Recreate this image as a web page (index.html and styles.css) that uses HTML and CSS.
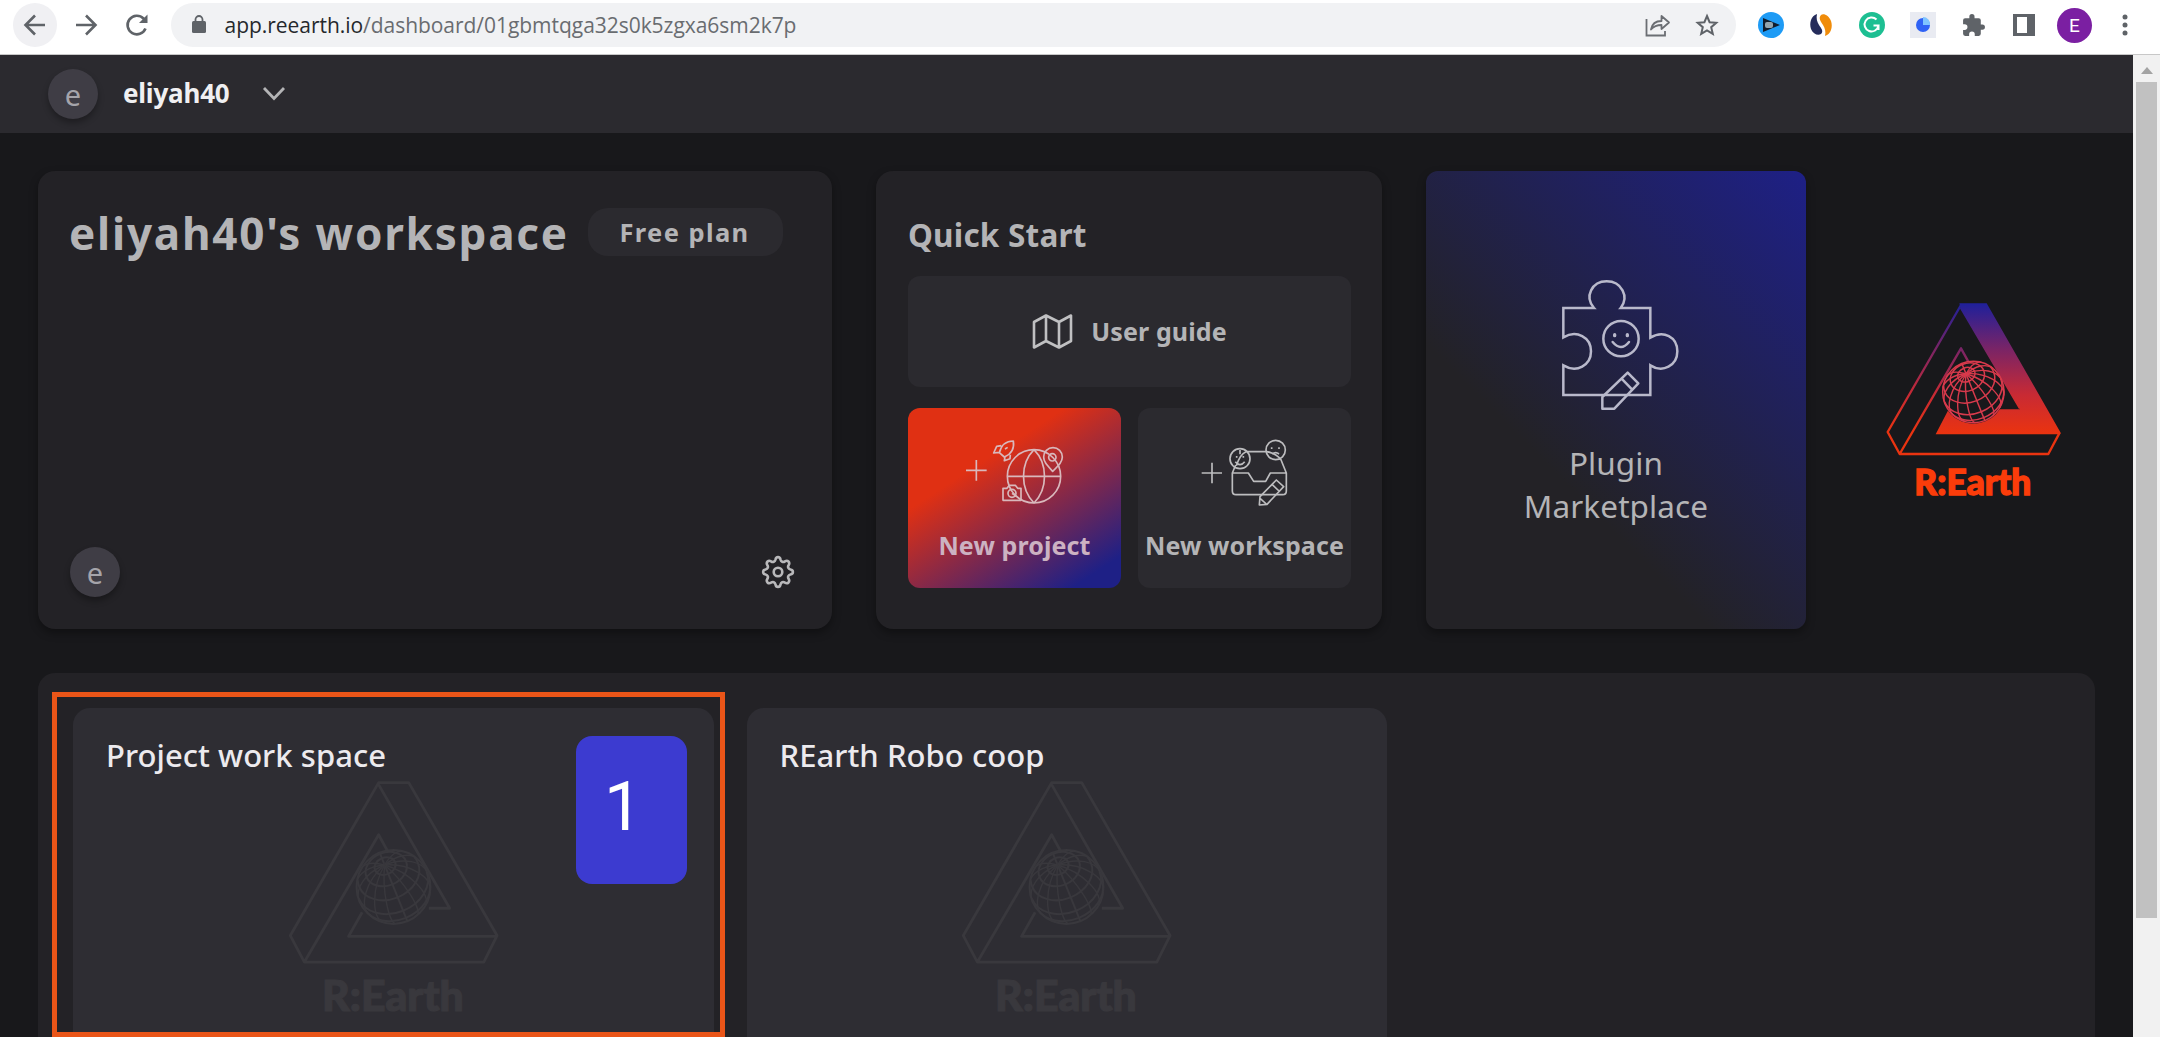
FILE: index.html
```
<!DOCTYPE html>
<html lang="en">
<head>
<meta charset="utf-8">
<title>Re:Earth dashboard</title>
<link rel="stylesheet" href="styles.css">
</head>
<body>
<svg class="defs" width="0" height="0" aria-hidden="true">
  <defs>
    <linearGradient id="brand" gradientUnits="userSpaceOnUse" x1="0" y1="72" x2="0" y2="460">
      <stop offset="0" stop-color="#20209a"/><stop offset=".35" stop-color="#7a2466"/><stop offset=".7" stop-color="#c82a34"/><stop offset="1" stop-color="#ea3310"/>
    </linearGradient>
    <symbol id="globe" viewBox="-100 -100 200 200" overflow="visible">
      <g fill="none">
        <circle r="92"/>
        <g transform="rotate(-22)">
          <ellipse cy="-56" rx="27" ry="21"/><ellipse cy="-48" rx="53" ry="41"/>
          <path d="M-76-50A80 62 0 0 0-79-33A79 61 0 0 0 79-33A80 62 0 0 0 76-50"/>
          <path d="M-91-6A91 70 0 0 0 91-6"/><path d="M-87 26A88 67 0 0 0 87 26"/>
          <path d="M0-92V92"/>
          <path class="meridian" transform="matrix(35.2 65.6 0 -59 0 0)" d="M0 1A1 1 0 0 0 .792-.61"/>
          <path class="meridian" transform="matrix(65 50.2 0 -59 0 0)" d="M0 1A1 1 0 0 0 .862-.508"/>
          <path class="meridian" transform="matrix(85 27.2 0 -59 0 0)" d="M0 1A1 1 0 0 0 .953-.304"/>
          <path class="meridian" transform="matrix(92 0 0 -59 0 0)" d="M0 1A1 1 0 0 0 1 0"/>
          <path class="meridian" transform="matrix(85 -27.2 0 -59 0 0)" d="M0 1A1 1 0 0 0 .953 .304"/>
          <path class="meridian" transform="matrix(65 -50.2 0 -59 0 0)" d="M0 1A1 1 0 0 0 .862 .508"/>
          <path class="meridian" transform="matrix(-35.2 65.6 0 -59 0 0)" d="M0 1A1 1 0 0 0 .792-.61"/>
          <path class="meridian" transform="matrix(-65 50.2 0 -59 0 0)" d="M0 1A1 1 0 0 0 .862-.508"/>
          <path class="meridian" transform="matrix(-85 27.2 0 -59 0 0)" d="M0 1A1 1 0 0 0 .953-.304"/>
          <path class="meridian" transform="matrix(-92 0 0 -59 0 0)" d="M0 1A1 1 0 0 0 1 0"/>
          <path class="meridian" transform="matrix(-85 -27.2 0 -59 0 0)" d="M0 1A1 1 0 0 0 .953 .304"/>
          <path class="meridian" transform="matrix(-65 -50.2 0 -59 0 0)" d="M0 1A1 1 0 0 0 .862 .508"/>
        </g>
      </g>
    </symbol>
    <symbol id="watermark" viewBox="0 0 690 720">
      <g fill="none" stroke="#39383d" stroke-width="7" stroke-linejoin="round">
        <path d="M303 75H378L598 456L565 522H118L83 456ZM303 80L480 388H428M325 245L303 205L118 522M262 398L228 458H598"/>
      </g>
      <g class="faint"><use href="#globe" x="240" y="235" width="200" height="200"/></g>
      <text class="wordmark" x="162" y="645" textLength="353" lengthAdjust="spacingAndGlyphs" fill="#39383d" stroke="#39383d" stroke-width="3">R:Earth</text>
    </symbol>
  </defs>
</svg>

<div class="browser">
  <div class="nav">
    <span class="nav-btn back"><svg width="24" height="24" viewBox="0 0 24 24"><path d="M22 12H3M12 2.500 2.500 12l9.500 9.500"/></svg></span>
    <span class="nav-btn"><svg width="24" height="24" viewBox="0 0 24 24"><path d="M2 12h19M12 2.500 21.500 12 12 21.500"/></svg></span>
    <span class="nav-btn"><svg width="24" height="24" viewBox="0 0 24 24"><path d="M20.500 15.500A9.300 9.300 0 1 1 18.500 5.500L21 8"/><path d="M22.500 1.500V10H14z" fill="#5f6368" stroke="none"/></svg></span>
  </div>
  <div class="omnibox">
    <svg class="lock" width="14" height="18" viewBox="0 0 14 18"><rect y="6" width="14" height="12" rx="1.500" fill="#5f6368"/><path d="M3.500 7V4.500a3.500 3.500 0 0 1 7 0V7" fill="none" stroke="#5f6368" stroke-width="1.800"/></svg>
    <span class="url">app.reearth.io<span class="path">/dashboard/01gbmtqga32s0k5zgxa6sm2k7p</span></span>
    <svg class="share" width="26" height="24" viewBox="0 0 26 24" fill="none" stroke="#6b6e73" stroke-width="1.800"><path d="M1.500 6V22.500H20V18"/><path d="M6 16.500C7 11 11 8 16.500 8V3L24 9.500 16.500 16V12C12 12 9 13 6 16.500Z" stroke-linejoin="round"/></svg>
    <svg class="star" width="24" height="24" viewBox="0 0 24 24" fill="none" stroke="#5f6368" stroke-width="2"><path d="M12 3l2.600 6.200 6.700.6-5.100 4.400 1.600 6.600-5.800-3.500-5.800 3.500 1.600-6.600-5.100-4.400 6.700-.6z"/></svg>
  </div>
  <div class="exts">
    <span><svg width="26" height="26" viewBox="0 0 26 26"><circle cx="13" cy="13" r="13" fill="#1e9bf5"/><path d="M5 6l17 7-17 7z" fill="#111b2b"/><rect x="7" y="10" width="8" height="6" rx="2" fill="#93a3ad"/></svg></span>
    <span><svg width="24" height="24" viewBox="0 0 24 24"><path d="M8 1C2 3 0 10 2 16c2 5 7 7 10 5 3-3 0-6-2-9S7 5 8 1z" fill="#252c5b"/><path d="M16 23c6-2 8-9 6-15-2-5-7-8-10-6-3 3 0 7 2 10s3 7 2 11z" fill="#f08c0a"/></svg></span>
    <span><svg width="26" height="26" viewBox="0 0 26 26"><circle cx="13" cy="13" r="13" fill="#1dbf92"/><path d="M17.500 7.500a7 7 0 1 0 2 6h-5M19.500 13.500V18" fill="none" stroke="#fff" stroke-width="2"/></svg></span>
    <span><svg width="26" height="26" viewBox="0 0 26 26"><path d="M0 0h26v26H0z" fill="#e9ebf2"/><circle cx="13" cy="13" r="7" fill="#2f62f5"/><path d="M13 13V5a7 7 0 0 1 7 8z" fill="#7fc4ff"/></svg></span>
    <span><svg width="25" height="25" viewBox="0 0 24 24"><path fill="#5f6368" d="M20.500 11H19V7a2 2 0 0 0-2-2h-4V3.500a2.500 2.500 0 0 0-5 0V5H4a2 2 0 0 0-2 2v3.800h1.500a2.700 2.700 0 0 1 0 5.400H2V20a2 2 0 0 0 2 2h3.800v-1.500a2.700 2.700 0 0 1 5.400 0V22H17a2 2 0 0 0 2-2v-4h1.500a2.500 2.500 0 0 0 0-5z"/></svg></span>
    <span><svg width="22" height="22" viewBox="0 0 22 22"><path d="M0 0h22v22H0zM4 3v16h10V3z" fill="#5f6368" fill-rule="evenodd"/></svg></span>
    <span><b class="profile">E</b></span>
    <span><svg width="6" height="22" viewBox="0 0 6 22" fill="#5f6368"><circle cx="3" cy="3" r="2.500"/><circle cx="3" cy="11" r="2.500"/><circle cx="3" cy="19" r="2.500"/></svg></span>
  </div>
</div>

<div class="viewport">
  <div class="page">
    <header class="header">
      <span class="avatar">e</span>
      <span class="user">eliyah40</span>
      <svg width="24" height="16" viewBox="0 0 24 16"><path d="M2 2l10 10.500L22 2" fill="none" stroke="#b4b4b6" stroke-width="2.800"/></svg>
    </header>

    <main class="dashboard">
      <div class="top">
        <section class="card workspace">
          <div class="ws-head">
            <h1>eliyah40's workspace</h1>
            <span class="plan">Free plan</span>
          </div>
          <div class="ws-foot">
            <span class="avatar">e</span>
            <svg width="34" height="34" viewBox="0 0 34 34" fill="none" stroke="#b8b8ba" stroke-width="2.600" stroke-linejoin="round"><path d="M14.500 4.500C15 1.300 19 1.300 19.500 4.500 20 6.800 22 7.600 24 6.300 26.700 4.700 29.300 7.300 27.700 10 26.400 12 27.200 14 29.500 14.500 32.700 15 32.700 19 29.500 19.500 27.200 20 26.400 22 27.700 24 29.300 26.700 26.700 29.300 24 27.700 22 26.400 20 27.200 19.500 29.500 19 32.700 15 32.700 14.500 29.500 14 27.200 12 26.400 10 27.700 7.300 29.300 4.700 26.700 6.300 24 7.600 22 6.800 20 4.500 19.500 1.300 19 1.300 15 4.500 14.500 6.800 14 7.600 12 6.300 10 4.700 7.300 7.300 4.700 10 6.300 12 7.600 14 6.800 14.500 4.500Z"/><circle cx="17" cy="17" r="4.300"/></svg>
          </div>
        </section>

        <section class="card quick">
          <h2>Quick Start</h2>
          <div class="tile guide">
            <svg width="41" height="37" viewBox="0 0 41 37" fill="none" stroke="#c0c0c2" stroke-width="2.600" stroke-linejoin="round"><path d="M2 9L14 2.500 27 9 39 2.500V28L27 34.500 14 28 2 34.500ZM14 2.500V28M27 9V34.500"/></svg>
            <span class="label">User guide</span>
          </div>
          <div class="pair">
            <div class="tile action project">
              <svg width="100" height="70" viewBox="285 832 300 210" fill="none" stroke="#d9b8bc" stroke-width="5" stroke-linejoin="round">
                <path d="M288 929h62M319 898v62"/><circle cx="492" cy="947" r="80"/><path d="M412 947h160M492 867c-42 42-42 118 0 160M492 867c42 42 42 118 0 160"/>
                <path d="M548 932c-18-20-27-29-27-43a27 27 0 0 1 56 0c0 14-9 23-29 43z"/><circle cx="547" cy="890" r="11"/>
                <path d="M399 983h12l7-9h18l7 9h10v36h-54z"/><circle cx="426" cy="998" r="12"/><path d="M426 998l14 10"/>
                <path d="M430 841c-22 0-36 12-42 35l15 13c22-9 31-23 27-48zM394 855l-14 2-9 20 16-2M421 882l-1 12-17 6 2-12M405 865l8-5"/>
              </svg>
              <span class="label project-label">New project</span>
            </div>
            <div class="tile action">
              <svg width="88" height="70" viewBox="994 832 264 210" fill="none" stroke="#bdbdbf" stroke-width="5" stroke-linejoin="round">
                <path d="M996 937h61M1027 906v62M1129 873h62M1233 895l17 42v54q0 11-11 11h-140q-11 0-11-11v-54l10-24M1088 937h48l16 25h36l14-25h48"/>
                <path d="M1129 873c-14 6-22 20-29 42M1191 873c16 3 32 10 42 24"/>
                <circle cx="1111" cy="894" r="30"/><path d="M1097 903q14 18 28 0M1101 886v5M1121 886v5M1111 868v13"/>
                <circle cx="1218" cy="868" r="29"/><path d="M1206 860v5M1228 860v5M1208 880q10-8 20 0"/>
                <path d="M1220 958l22 20-50 53-23 2 2-25zM1207 971l21 20M1172 1014l18 16"/>
              </svg>
              <span class="label">New workspace</span>
            </div>
          </div>
        </section>

        <section class="plugin">
          <svg width="120" height="134" viewBox="422 355 360 402" fill="none" stroke="#b9b9cb" stroke-width="7.500">
            <path d="M432 445h92c-30-34-6-80 38-80s69 46 42 80h89v89c40-24 81-2 81 41s-44 66-81 42v89H432v-89c40 24 83 0 83-42s-43-66-83-42z"/>
            <circle cx="605" cy="537" r="53"/><path d="M580 547q25 30 49 0" stroke-linecap="round"/><path d="M586 525v3M624 525v3" stroke-linecap="round" stroke-width="10"/>
            <path d="M625 639l32 32-72 76h-36v-35zM606 656l32 33" stroke-linejoin="round"/>
          </svg>
          <p>Plugin<br>Marketplace</p>
        </section>

        <svg class="logo" width="230" height="240" viewBox="0 0 690 720">
          <path fill="url(#brand)" d="M298 70H380L602 458 600 463H227L266 388H480L303 86Z"/>
          <circle cx="340" cy="336" r="95" fill="#18181b"/>
          <path fill="none" stroke="url(#brand)" stroke-width="7" stroke-linejoin="round" d="M303 75L83 456L119 522H565L599 458M325 245L303 205L119 522M303 84L480 385"/>
          <g class="vivid"><use href="#globe" x="240" y="236" width="200" height="200"/></g>
          <text class="wordmark" x="163" y="646" textLength="351" lengthAdjust="spacingAndGlyphs" fill="#fb3c0a" stroke="#fb3c0a" stroke-width="4">R:Earth</text>
        </svg>
      </div>

      <div class="projects">
        <article class="proj">
          <h3>Project work space</h3>
          <svg class="mark" width="277" height="290"><use href="#watermark"/></svg>
          <span class="step">1</span>
          <span class="frame"></span>
        </article>
        <article class="proj">
          <h3>REarth Robo coop</h3>
          <svg class="mark" width="277" height="290"><use href="#watermark"/></svg>
        </article>
      </div>
    </main>
  </div>
  <div class="scrollbar">
    <svg width="12" height="7" viewBox="0 0 12 7"><path d="M0 7L6 0l6 7z" fill="#a3a3a3"/></svg>
    <div class="thumb"></div>
  </div>
</div>
</body>
</html>
```
FILE: styles.css
```
* { box-sizing: border-box; }
body {
  margin: 0;
  height: 1037px;
  overflow: hidden;
  display: flex;
  flex-direction: column;
  font-family: "Noto Sans", "Open Sans", sans-serif;
  color: #b4b4b6;
  background: #18181b;
}
h1, h2, h3, p { margin: 0; white-space: nowrap; }
svg { display: block; flex: none; }
.defs { position: absolute; }

/* browser toolbar */
.browser {
  height: 55px;
  flex: none;
  display: flex;
  align-items: flex-start;
  background: #fff;
  border-bottom: 1px solid #c8c8c8;
}
.nav { display: flex; width: 171px; padding: 3px 0 0 13px; gap: 7px; }
.nav-btn { width: 44px; height: 44px; border-radius: 50%; display: grid; place-items: center; }
.nav-btn.back { background: #f0f0f3; }
.nav-btn svg { fill: none; stroke: #5f6368; stroke-width: 2.6; }
.omnibox {
  width: 1565px;
  height: 44px;
  margin-top: 3px;
  padding: 0 17px 0 21px;
  border-radius: 22px;
  background: #f1f2f4;
  display: flex;
  align-items: center;
}
.lock { margin-top: -3px; }
.url { flex: 1; margin-left: 18.5px; font: 21px/44px "Open Sans", sans-serif; color: #25282c; letter-spacing: -.04px; }
.path { color: #696c70; }
.star { margin-left: 24px; }
.exts { display: flex; height: 50px; margin-left: 9.5px; }
.exts span { width: 50.6px; display: grid; place-items: center; }
.profile {
  width: 35px; height: 35px; border-radius: 50%;
  background: #7b1fa2; color: #fff;
  font: 19px/35px Roboto, sans-serif; text-align: center;
}

/* page and scrollbar */
.viewport { flex: 1; display: flex; min-height: 0; }
.page { width: 2133px; display: flex; flex-direction: column; }
.scrollbar { flex: 1; background: #f1f1f1; display: flex; flex-direction: column; align-items: center; padding-top: 12px; }
.thumb { width: 21px; height: 836px; margin-top: 8px; background: #c1c1c1; }

.header { height: 78px; flex: none; display: flex; align-items: center; padding-left: 48px; background: #2b2a2f; }
.header svg { margin-left: 32px; }
.avatar {
  width: 50px; height: 50px; border-radius: 50%;
  background: #3f3d45; color: #a5a4aa;
  font-size: 29px; line-height: 52px; text-align: center;
  box-shadow: 0 4px 6px rgba(0, 0, 0, .3);
}
.user { margin: -2px 0 0 25px; font-size: 26px; font-weight: 700; color: #f0f0f2; letter-spacing: -.2px; }

.dashboard { padding: 38px 38px 0; flex: 1; min-height: 0; display: flex; flex-direction: column; gap: 44px; }
.top { display: flex; gap: 44px; height: 458px; flex: none; }
.card { border-radius: 17px; background: #232226; box-shadow: 0 4px 8px rgba(0, 0, 0, .35); }

.workspace { width: 794px; display: flex; flex-direction: column; justify-content: space-between; padding: 30px 37px 32px 32px; }
.ws-head { display: flex; align-items: center; gap: 22px; }
h1 { width: 497px; font-size: 44px; line-height: 64px; font-weight: 700; letter-spacing: 1.78px; margin-left: -1px; }
.plan { width: 195px; height: 48px; margin-top: -2px; border-radius: 20px; background: #2b2a2f; font-size: 25.5px; line-height: 48px; font-weight: 700; letter-spacing: 1.4px; text-align: center; padding-right: 2px; }
.ws-foot { display: flex; justify-content: space-between; align-items: center; }

.quick { width: 506px; padding: 43px 31px 0 32px; }
h2 { font-size: 31.5px; line-height: 42px; font-weight: 700; letter-spacing: .2px; }
.tile { border-radius: 12px; background: #2b2a2f; }
.guide { height: 111px; margin-top: 20px; display: flex; align-items: center; justify-content: center; gap: 18px; }
.label { font-size: 25px; line-height: 34px; margin-top: -1px; font-weight: 700; letter-spacing: .12px; white-space: nowrap; }
.pair { display: flex; gap: 17px; margin-top: 21px; }
.action { width: 213px; height: 180px; padding-top: 30px; display: flex; flex-direction: column; align-items: center; gap: 21px; }
.project { background: linear-gradient(147deg, #e03013 32%, #1e2086 90%); }
.project-label { color: #ccb2c2; }

.plugin {
  width: 380px;
  padding-top: 107px;
  border-radius: 12px;
  background: linear-gradient(225deg, #1e2086 0%, #232226 66%);
  box-shadow: 0 4px 8px rgba(0, 0, 0, .35);
  display: flex; flex-direction: column; align-items: center;
}
.plugin svg { margin-left: 7px; }
.plugin p { margin-top: 29px; font-size: 31.5px; line-height: 43px; letter-spacing: .1px; text-align: center; }
.logo { margin: 109px 0 0 10px; }
.wordmark { font-family: Lato, sans-serif; font-weight: 900; font-size: 106px; }
.meridian { vector-effect: non-scaling-stroke; stroke-width: 1.4px; }
.vivid { stroke: #d83a4c; stroke-width: 4.5px; }
.faint { stroke: #39383d; stroke-width: 5px; }

.projects { flex: 1; min-height: 0; padding: 35px 34px 0 35px; display: flex; gap: 33px; border-radius: 17px 17px 0 0; background: #232226; }
.proj { position: relative; width: 640.500px; border-radius: 17px 17px 0 0; background: #2e2d33; padding: 25px 34px 0 33px; }
h3 { font-size: 31px; line-height: 44px; font-weight: 500; color: #eceaee; letter-spacing: .05px; }
.mark { position: absolute; left: 183.5px; top: 43.5px; }
.step {
  position: absolute; left: 503px; top: 28px;
  width: 111px; height: 148px; padding-right: 17px;
  border-radius: 16px; background: #3c3bd0; color: #fff;
  font: 400 68px/143px Roboto, sans-serif; text-align: center;
}
.frame { position: absolute; left: -21px; top: -16px; width: 673px; height: 345px; border: 5px solid #ea5518; }
```
